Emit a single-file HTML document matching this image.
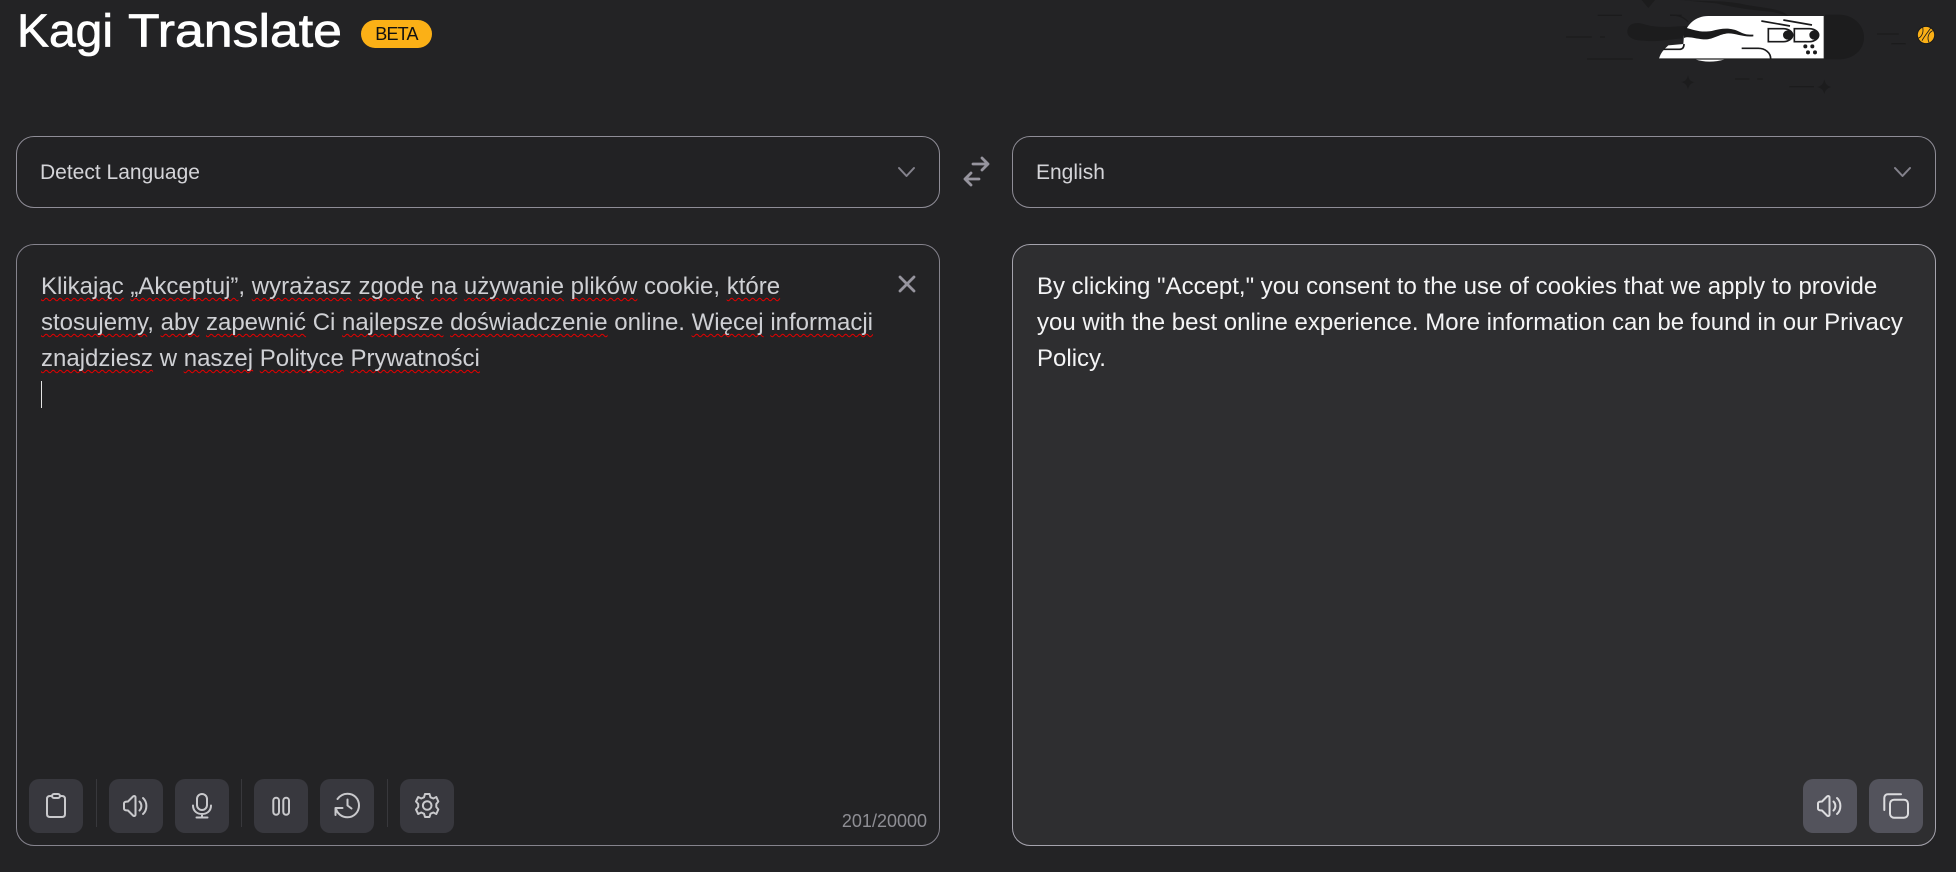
<!DOCTYPE html>
<html lang="en"><head><meta charset="utf-8"><title>Kagi Translate</title>
<style>
*{box-sizing:border-box}
html,body{margin:0;padding:0;width:1956px;height:872px;overflow:hidden;background:#232325;font-family:"Liberation Sans",sans-serif}
.abs{position:absolute}
.sel{position:absolute;top:136px;height:72px;width:924px;border:1px solid #8f8d97;border-radius:18px;color:#d4d4d8;font-size:21px;line-height:72px;padding-left:23px;background:#222224}
.panel{position:absolute;top:244px;height:602px;width:924px;border:1px solid #85838d;border-radius:18px}
.txt{position:absolute;top:269px;font-size:24px;line-height:36px;white-space:nowrap}
.sp{text-decoration:underline wavy #e80000 1.2px;text-underline-offset:3px;text-decoration-skip-ink:none}
.btn{position:absolute;top:779px;width:54px;height:54px;border-radius:10px;background:#38383e}
.btn.r{background:#53535c}
.btn svg{position:absolute;left:12px;top:12px;width:30px;height:30px;fill:none;stroke:#c9c9cc;stroke-width:2;stroke-linecap:round;stroke-linejoin:round}
.btn.r svg{stroke:#dcdcdf}
.div{position:absolute;top:779px;width:1px;height:48px;background:#38383c}
</style></head><body>

<svg class="abs" style="left:0;top:0" width="360" height="66" font-family="Liberation Sans" font-size="46" fill="#fff" stroke="#fff" stroke-width=".7">
<text x="17" y="46.500" textLength="96" lengthAdjust="spacingAndGlyphs">Kagi</text>
<text x="128" y="46.500" textLength="214" lengthAdjust="spacingAndGlyphs">Translate</text>
</svg>
<div class="abs" style="left:361px;top:20px;width:71px;height:28px;border-radius:14px;background:#fbb016;color:#111;font-size:18px;letter-spacing:-.8px;line-height:28px;text-align:center">BETA</div>

<svg class="abs" style="left:1540px;top:0" width="416" height="100" viewBox="0 0 1248 300">
<g fill="#1c1c1d" stroke="none">
<path d="M855 44H895C940 44 972 75 972 112C972 150 940 178 895 178H855Z"/>
<path d="M420 0C500 5 560 0 620 15C680 25 720 25 745 48L700 36C640 30 590 25 530 10Z"/>
<path d="M262 95C262 72 285 65 310 72C360 88 400 78 450 78V114C400 114 360 128 310 122C285 122 262 114 262 95Z"/>
<path d="M305 0H345L325 24Z"/>
<path d="M444 226C447 240 452 245 464 246C452 250 447 255 444 268C441 255 436 250 424 246C436 244 441 238 444 226Z"/>
<path d="M853 238C856 252 862 258 874 261C862 264 856 270 853 282C850 270 844 264 832 261C844 258 850 252 853 238Z"/>
</g>
<g stroke="#1b1b1c" stroke-width="4" fill="none">
<path d="M173 46H246M390 46H425M78 111H155M180 111H195M141 177H278M585 237H628M652 237H668M748 260H822M1011 102H1076M1054 131H1097"/>
<path d="M390 45C415 45 430 50 445 66"/>
</g>
<path d="M357 176C362 158 372 148 385 136L430 132L432 105C440 75 465 48 505 48H853V176H690C640 176 590 176 555 178C520 188 490 186 466 178Z" fill="#fff"/>
<path d="M853 48V177M357 177H853" stroke="#202021" stroke-width="4" fill="none"/>
<path d="M370 148H418C428 148 432 142 432 132" stroke="#1a1a1b" stroke-width="5" fill="none"/>
<path d="M432 82C465 90 480 98 515 93C550 83 575 83 600 96C615 104 625 104 640 104V109C610 112 590 100 565 100C535 102 520 120 490 118C465 116 445 108 432 114Z" fill="#1a1a1b"/>
<path d="M605 145H655C675 145 692 158 692 176" stroke="#1a1a1b" stroke-width="5" fill="none"/>
<path d="M664 63L750 78M730 60L816 75" stroke="#1a1a1b" stroke-width="5" fill="none"/>
<path d="M685 86H730C745 86 758 95 758 105C758 116 745 125 730 125H685Z" stroke="#1a1a1b" stroke-width="5" fill="#fff"/>
<path d="M763 86H808C823 86 836 95 836 105C836 116 823 125 808 125H763Z" stroke="#1a1a1b" stroke-width="5" fill="#fff"/>
<circle cx="743" cy="105" r="14" fill="#1a1a1b"/><circle cx="822" cy="105" r="14" fill="#1a1a1b"/>
<g fill="#1a1a1b"><circle cx="796" cy="139" r="6"/><circle cx="817" cy="139" r="6"/><circle cx="804" cy="157" r="6"/><circle cx="825" cy="157" r="6"/></g>
<circle cx="1158" cy="105" r="26" fill="#fbb016" stroke="#1a1a1b" stroke-width="3"/>
<path d="M1148 82C1152 98 1144 112 1134 115M1178 92C1166 98 1160 112 1167 127M1146 122C1152 110 1164 96 1172 84" stroke="#1a1a1b" stroke-width="2.500" fill="none"/>
</svg>

<div class="sel" style="left:16px">Detect Language</div>
<svg class="abs" style="left:897px;top:165px" width="20" height="14" fill="none" stroke="#84828c" stroke-width="2" stroke-linecap="round" stroke-linejoin="round"><path d="M2 3L9.500 11L17 3"/></svg>
<svg class="abs" style="left:960px;top:154px" width="34" height="36" fill="none" stroke="#96949e" stroke-width="2.800" stroke-linecap="round" stroke-linejoin="round"><path d="M13 10H28M22 4L28 10L22 16M19 25H5M11 19L5 25L11 31"/></svg>
<div class="sel" style="left:1012px">English</div>
<svg class="abs" style="left:1893px;top:165px" width="20" height="14" fill="none" stroke="#84828c" stroke-width="2" stroke-linecap="round" stroke-linejoin="round"><path d="M2 3L9.500 11L17 3"/></svg>

<div class="panel" style="left:16px;background:#232325"></div>
<div class="panel" style="left:1012px;background:#2e2e30;border-color:#a5a3ad"></div>

<div class="txt" style="left:41px;color:#cfd0d4">
<span class="sp">Klikając</span> <span class="sp">„Akceptuj”</span>, <span class="sp">wyrażasz</span> <span class="sp">zgodę</span> <span class="sp">na</span> <span class="sp">używanie</span> <span class="sp">plików</span> cookie, <span class="sp">które</span><br>
<span class="sp">stosujemy</span>, <span class="sp">aby</span> <span class="sp">zapewnić</span> Ci <span class="sp">najlepsze</span> <span class="sp">doświadczenie</span> online. <span class="sp">Więcej</span> <span class="sp">informacji</span><br>
<span class="sp">znajdziesz</span> w <span class="sp">naszej</span> <span class="sp">Polityce</span> <span class="sp">Prywatności</span>
</div>
<div class="abs" style="left:41px;top:381px;width:1px;height:27px;background:#e4e4e4"></div>
<svg class="abs" style="left:897px;top:274px" width="20" height="20" fill="none" stroke="#96949e" stroke-width="2.800" stroke-linecap="round"><path d="M3 3L17 17M17 3L3 17"/></svg>

<div class="txt" style="left:1037px;color:#f4f4f5">By clicking "Accept," you consent to the use of cookies that we apply to provide<br>you with the best online experience. More information can be found in our Privacy<br>Policy.</div>

<div class="btn" style="left:29px"><svg viewBox="0 0 30 30"><path d="M10.500 5H9C7 5 6 6 6 8V23C6 25 7 26 9 26H21C23 26 24 25 24 23V8C24 6 23 5 21 5H19.500"/><rect x="11" y="3" width="8" height="4" rx="2"/></svg></div>
<div class="div" style="left:96px"></div>
<div class="btn" style="left:109px"><svg viewBox="0 0 30 30"><path d="M3 12.500C3 11.500 3.800 11 4.500 10.800L7 10.500L12 5.500C13 4.500 14.500 5 14.500 6.500V23.500C14.500 25 13 25.500 12 24.500L7 19.500L4.500 19.200C3.800 19 3 18.500 3 17.500Z"/><path d="M18.500 10.500C21 13 21 17 18.500 19.500M22 7C26.500 11 26.500 19 22 23"/></svg></div>
<div class="btn" style="left:175px"><svg viewBox="0 0 30 30"><rect x="10" y="3" width="10" height="16" rx="5"/><path d="M6 14.500C6 20 10 23 15 23C20 23 24 20 24 14.500M15 23V26.500M9.500 26.500H20.500"/></svg></div>
<div class="div" style="left:241px"></div>
<div class="btn" style="left:254px"><svg viewBox="0 0 30 30"><rect x="7.300" y="6.700" width="5.700" height="17" rx="2.800"/><rect x="17.300" y="6.700" width="5.700" height="17" rx="2.800"/></svg></div>
<div class="btn" style="left:320px"><svg viewBox="0 0 30 30"><path d="M5.500 8C8 4.500 11.500 2.700 15.500 2.700C22 2.700 27 7.800 27 14.500C27 21 22 26.300 15.500 26.300C10 26.300 5 22.500 4 17.500"/><path d="M3.500 24V17H10.500M15.500 8.500V14.500L19.500 17.500"/></svg></div>
<div class="div" style="left:387px"></div>
<div class="btn" style="left:400px"><svg viewBox="0 0 30 30"><circle cx="15.200" cy="14.500" r="4.300"/><path d="M13 3H17.500L18.500 6.300L21.300 7.500L24.300 6L26.300 10.500L24.300 13V16L26.300 18.500L24.300 23L21.300 21.500L18.500 22.700L17.500 26H13L12 22.700L9.200 21.500L6.200 23L4 18.500L6.200 16V13L4 10.500L6.200 6L9.200 7.500L12 6.300Z"/></svg></div>

<div class="abs" style="right:1029px;top:811px;font-size:18px;line-height:20px;color:#8e8e94">201/20000</div>

<div class="btn r" style="left:1803px"><svg viewBox="0 0 30 30"><path d="M3 12.500C3 11.500 3.800 11 4.500 10.800L7 10.500L12 5.500C13 4.500 14.500 5 14.500 6.500V23.500C14.500 25 13 25.500 12 24.500L7 19.500L4.500 19.200C3.800 19 3 18.500 3 17.500Z"/><path d="M18.500 10.500C21 13 21 17 18.500 19.500M22 7C26.500 11 26.500 19 22 23"/></svg></div>
<div class="btn r" style="left:1869px"><svg viewBox="0 0 30 30"><rect x="9" y="8.700" width="18" height="18" rx="4"/><path d="M3.300 19V7C3.300 4.500 4.800 3.300 7 3.300H20"/></svg></div>
</body></html>
